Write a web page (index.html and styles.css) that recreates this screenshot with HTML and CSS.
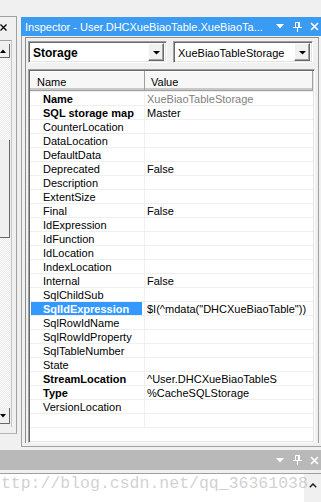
FILE: index.html
```html
<!DOCTYPE html>
<html>
<head>
<meta charset="utf-8">
<link rel="stylesheet" href="styles.css">
</head>
<body>
<div class="main">
  <div class="lpane">
    <div class="lclose">
      <svg width="7" height="7" viewBox="0 0 7 7"><path d="M0.5 0.5L6.5 6.5M6.5 0.5L0.5 6.5" stroke="#000" stroke-width="1.3"/></svg>
    </div>
    <div class="lbox">
      <div class="lsb">
        <div class="lbtn lup"><svg width="6" height="4" viewBox="0 0 6 4"><path d="M0 4L3 0.5L6 4Z" fill="#000"/></svg></div>
        <div class="ltrack t1"></div>
        <div class="lthumb"></div>
        <div class="ltrack t2"></div>
        <div class="lbtn ldown"><svg width="6" height="4" viewBox="0 0 6 4"><path d="M0 0L6 0L3 3.5Z" fill="#000"/></svg></div>
      </div>
    </div>
  </div>
  <div class="inspector">
    <div class="title">
      <span class="ttext">Inspector - User.DHCXueBiaoTable.XueBiaoTa...</span>
      <div class="ticons">
        <svg class="i-down" width="8" height="5" viewBox="0 0 8 5"><path d="M0 0H8L4 4.5Z" fill="#fff"/></svg>
        <svg class="i-pin" width="9" height="10" viewBox="0 0 9 10"><path d="M2.5 0.5H6.5V5.5H2.5Z" fill="none" stroke="#fff"/><rect x="5" y="0" width="2" height="6" fill="#fff"/><rect x="0" y="5" width="9" height="1" fill="#fff"/><rect x="4" y="6" width="1" height="4" fill="#fff"/></svg>
        <svg class="i-x" width="9" height="9" viewBox="0 0 9 9"><path d="M1 1L8 8M8 1L1 8" stroke="#fff" stroke-width="1.6"/></svg>
      </div>
    </div>
    <div class="ibody">
      <div class="frame">
        <div class="combos">
          <div class="combo c1">
            <span class="ctext bold12">Storage</span>
            <div class="cbtn"><svg width="7" height="4" viewBox="0 0 7 4"><path d="M0 0H7L3.5 3.5Z" fill="#000"/></svg></div>
          </div>
          <div class="combo c2">
            <span class="ctext">XueBiaoTableStorage</span>
            <div class="cbtn"><svg width="7" height="4" viewBox="0 0 7 4"><path d="M0 0H7L3.5 3.5Z" fill="#000"/></svg></div>
          </div>
        </div>
        <div class="table">
          <div class="thead">
            <div class="th thn">Name</div>
            <div class="th thv">Value</div>
          </div>
          <div class="row"><div class="nc b">Name</div><div class="vc ro">XueBiaoTableStorage</div></div>
          <div class="row"><div class="nc b">SQL storage map</div><div class="vc">Master</div></div>
          <div class="row"><div class="nc">CounterLocation</div><div class="vc"></div></div>
          <div class="row"><div class="nc">DataLocation</div><div class="vc"></div></div>
          <div class="row"><div class="nc">DefaultData</div><div class="vc"></div></div>
          <div class="row"><div class="nc">Deprecated</div><div class="vc">False</div></div>
          <div class="row"><div class="nc">Description</div><div class="vc"></div></div>
          <div class="row"><div class="nc">ExtentSize</div><div class="vc"></div></div>
          <div class="row"><div class="nc">Final</div><div class="vc">False</div></div>
          <div class="row"><div class="nc">IdExpression</div><div class="vc"></div></div>
          <div class="row"><div class="nc">IdFunction</div><div class="vc"></div></div>
          <div class="row"><div class="nc">IdLocation</div><div class="vc"></div></div>
          <div class="row"><div class="nc">IndexLocation</div><div class="vc"></div></div>
          <div class="row"><div class="nc">Internal</div><div class="vc">False</div></div>
          <div class="row"><div class="nc">SqlChildSub</div><div class="vc"></div></div>
          <div class="row sel"><div class="nc b">SqlIdExpression</div><div class="vc">$I(^mdata("DHCXueBiaoTable"))</div></div>
          <div class="row"><div class="nc">SqlRowIdName</div><div class="vc"></div></div>
          <div class="row"><div class="nc">SqlRowIdProperty</div><div class="vc"></div></div>
          <div class="row"><div class="nc">SqlTableNumber</div><div class="vc"></div></div>
          <div class="row"><div class="nc">State</div><div class="vc"></div></div>
          <div class="row"><div class="nc b">StreamLocation</div><div class="vc">^User.DHCXueBiaoTableS</div></div>
          <div class="row"><div class="nc b">Type</div><div class="vc">%CacheSQLStorage</div></div>
          <div class="row"><div class="nc">VersionLocation</div><div class="vc"></div></div>
          <div class="row"><div class="nc"></div><div class="vc"></div></div>
          <div class="row last"></div>
        </div>
      </div>
    </div>
  </div>
</div>
<div class="dock">
  <svg class="i-down" width="8" height="5" viewBox="0 0 8 5"><path d="M0 0H8L4 4.5Z" fill="#fff"/></svg>
  <svg class="i-pin" width="9" height="10" viewBox="0 0 9 10"><path d="M2.5 0.5H6.5V5.5H2.5Z" fill="none" stroke="#fff"/><rect x="5" y="0" width="2" height="6" fill="#fff"/><rect x="0" y="5" width="9" height="1" fill="#fff"/><rect x="4" y="6" width="1" height="4" fill="#fff"/></svg>
  <svg class="i-x" width="9" height="9" viewBox="0 0 9 9"><path d="M1 1L8 8M8 1L1 8" stroke="#fff" stroke-width="1.6"/></svg>
</div>
<div class="sep"></div>
<div class="out">
  <div class="oscroll">
    <svg width="8" height="5" viewBox="0 0 8 5"><path d="M0.8 4.2L4 1L7.2 4.2" fill="none" stroke="#222" stroke-width="1.5"/></svg>
  </div>
  <div class="wm">http://blog.csdn.net/qq_36361038</div>
</div>
</body>
</html>
```
FILE: styles.css
```css
* { box-sizing: border-box; }
html, body { margin: 0; padding: 0; }
body {
  width: 321px;
  height: 502px;
  overflow: hidden;
  background: #f0f0f0;
  font-family: "Liberation Sans", Arial, sans-serif;
  font-size: 11px;
  color: #000;
}
.main {
  display: flex;
  height: 447px;
}
.lpane {
  width: 17px;
  height: 418px;
  margin-top: 16px;
  border-top: 1px solid #a0a0a0;
  border-right: 1px solid #a0a0a0;
  border-bottom: 1px solid #b4b4b4;
  display: flex;
  flex-direction: column;
  flex-shrink: 0;
}
.lclose {
  height: 23px;
  padding-top: 7px;
  display: flex;
  align-items: flex-start;
}
.lclose svg { display: block; }
.lbox {
  width: 12px;
  height: 387px;
  border-top: 1px solid #a0a0a0;
  border-right: 1px solid #c8c8c8;
  padding-top: 3px;
}
.lsb {
  width: 10px;
  height: 380px;
  display: flex;
  flex-direction: column;
}
.lbtn {
  background: #f0f0f0;
  border-right: 1px solid #696969;
  border-bottom: 1px solid #696969;
  display: flex;
  align-items: center;
}
.lbtn svg { display: block; }
.lup { height: 14px; }
.ldown { height: 16px; }
.ltrack {
  background: repeating-conic-gradient(#ebebeb 0 25%, #fdfdfd 0 50%) 0 0 / 2px 2px;
}
.t1 { height: 82px; }
.t2 { flex: 1; }
.lthumb {
  height: 98px;
  background: #f0f0f0;
  border-right: 1px solid #696969;
  border-bottom: 1px solid #696969;
}
.inspector {
  margin-left: 4px;
  margin-top: 17px;
  width: 300px;
  height: 430px;
  display: flex;
  flex-direction: column;
}
.title {
  height: 20px;
  background: #3a9bf2;
  color: #fff;
  display: flex;
  align-items: center;
  padding-left: 4px;
  font-size: 11px;
  white-space: nowrap;
}
.ttext { flex: 1; overflow: hidden; }
.ticons, .dock {
  display: flex;
  align-items: center;
}
.i-down { display: block; margin-right: 9px; }
.i-pin { display: block; margin-right: 8px; }
.i-x { display: block; margin-right: 2px; }
.ibody {
  flex: 1;
  display: flex;
  border-left: 1px solid #a0a0a0;
  border-bottom: 1px solid #a0a0a0;
  padding: 1px 2px 3px 3px;
}
.frame {
  flex: 1;
  display: flex;
  flex-direction: column;
  border-left: 1px solid #8c8c8c;
  border-top: 1px solid #8c8c8c;
  border-right: 1px solid #a0a0a0;
  padding: 3px 3px 0 2px;
}
.combos {
  display: flex;
  gap: 6px;
  height: 22px;
}
.combo {
  background: #fff;
  border-top: 1px solid #a0a0a0;
  border-left: 1px solid #a0a0a0;
  border-right: 1px solid #fff;
  border-bottom: 1px solid #fff;
  box-shadow: inset 1px 1px 0 #696969, inset -1px -1px 0 #e3e3e3;
  display: flex;
  align-items: center;
  padding: 2px 2px 2px 3px;
}
.c1 { width: 139px; }
.c2 { width: 140px; }
.ctext { flex: 1; padding-left: 1px; padding-top: 1px; white-space: nowrap; }
.bold12 { font-weight: bold; font-size: 12px; }
.cbtn {
  width: 16px;
  height: 18px;
  background: #f0f0f0;
  border: 1px solid;
  border-color: #fff #696969 #696969 #fff;
  box-shadow: inset -1px -1px 0 #a0a0a0;
  display: flex;
  align-items: center;
  justify-content: center;
}
.cbtn svg { display: block; margin-top: 1px; }
.table {
  margin-top: 6px;
  flex: 1;
  background: #fff;
  border-top: 1px solid #a0a0a0;
  border-left: 1px solid #a0a0a0;
  border-right: 1px solid #fff;
  border-bottom: 1px solid #fff;
  box-shadow: inset 1px 1px 0 #696969, inset -1px -1px 0 #e3e3e3;
  padding: 1px;
  overflow: hidden;
  display: flex;
  flex-direction: column;
}
.thead {
  display: flex;
  height: 20px;
  flex-shrink: 0;
  background: #f7f7f7;
  border-bottom: 1px solid #a0a0a0;
  box-shadow: inset 0 -2px 0 #c8c8c8, inset 0 1px 0 #fff;
}
.th {
  padding-top: 5px;
  line-height: 13px;
}
.thn {
  width: 115px;
  padding-left: 7px;
  border-right: 1px solid #a0a0a0;
}
.thv {
  flex: 1;
  padding-left: 6px;
  border-right: 1px solid #a0a0a0;
}
.row {
  display: flex;
  height: 14px;
  flex-shrink: 0;
  border-top: 1px solid #efefef;
  line-height: 13px;
  white-space: nowrap;
}
.nc {
  width: 115px;
  padding-left: 13px;
  padding-top: 1px;
  border-right: 1px solid #efefef;
  overflow: hidden;
}
.vc {
  flex: 1;
  padding-left: 2px;
  padding-top: 1px;
  overflow: hidden;
}
.b { font-weight: bold; }
.ro { color: #808080; }
.sel .nc {
  background: #3399ff;
  color: #fff;
  box-shadow: inset 1px 0 0 #fff, inset -2px 0 0 #fff;
}
.last { border-top: 1px solid #efefef; }
.dock {
  margin-top: 3px;
  height: 20px;
  background: #b9b9b9;
  justify-content: flex-end;
}
.sep {
  height: 4px;
  border-bottom: 1px solid #a0a0a0;
}
.out {
  height: 28px;
  background: #fff;
  display: flex;
  position: relative;
  overflow: hidden;
}
.oscroll {
  margin-left: auto;
  width: 17px;
  background: #f0f0f0;
  display: flex;
  justify-content: center;
  padding-top: 9px;
}
.oscroll svg { display: block; }
.wm {
  position: absolute;
  left: -9px;
  top: 0;
  font-family: "Liberation Mono", "Courier New", monospace;
  font-size: 16.5px;
  line-height: 20px;
  color: rgba(170, 170, 170, 0.55);
  white-space: nowrap;
}
```
